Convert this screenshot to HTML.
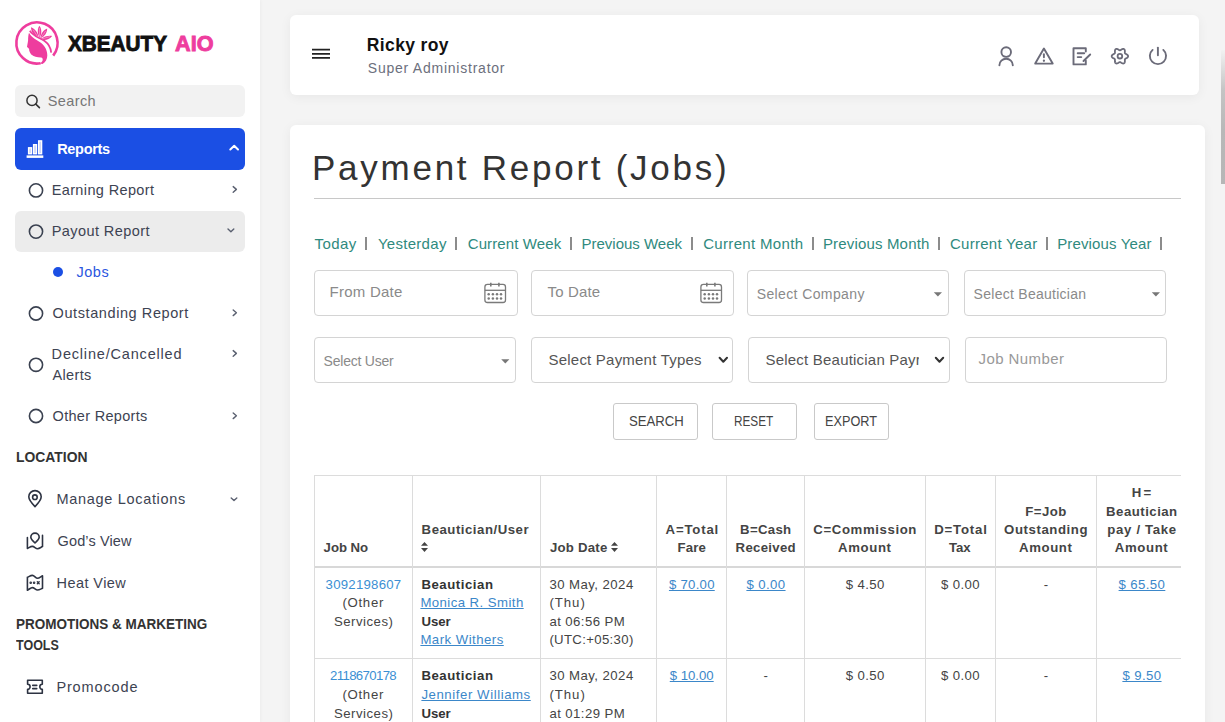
<!DOCTYPE html>
<html><head><meta charset="utf-8"><title>Payment Report (Jobs)</title>
<style>
*{box-sizing:border-box;margin:0;padding:0}
html,body{width:1225px;height:722px;overflow:hidden}
body{background:#f4f4f4;font-family:"Liberation Sans",sans-serif;position:relative}
.t{position:absolute;white-space:nowrap;line-height:normal}
.u{text-decoration:underline;text-underline-offset:1px;text-decoration-thickness:1px}
.abs{position:absolute}
#side{position:absolute;left:0;top:0;width:260px;height:722px;background:#fff;box-shadow:1px 0 3px rgba(0,0,0,.035)}
.card{position:absolute;background:#fff;border-radius:6px;box-shadow:0 2px 12px rgba(0,0,0,.055)}
.box{position:absolute;border:1px solid #d4d4d4;border-radius:4px;background:#fff}
.btn{position:absolute;border:1px solid #c9c9c9;border-radius:3px;background:#fff}
.sep{position:absolute;width:2px;height:13px;background:#8c8c8c;top:237px}
.hl{position:absolute;height:1px;background:#dcdcdc}
.vl{position:absolute;width:1px;background:#dcdcdc}
svg{position:absolute;overflow:visible}
</style></head><body>
<div id="side"></div>
<div class="card" style="left:290px;top:15px;width:909px;height:80px"></div>
<div class="card" style="left:290px;top:125px;width:915px;height:640px"></div>
<div class="abs" style="left:1221px;top:50px;width:4px;height:134px;background:linear-gradient(#f2f2f2 0px,#c4c4c4 40px,#b8b8b8 80px,#b6b6b6 134px)"></div>

<!-- sidebar boxes -->
<div class="abs" style="left:15px;top:85px;width:230px;height:32px;background:#f2f2f2;border-radius:6px"></div>
<div class="abs" style="left:15px;top:128px;width:230px;height:42px;background:#1b4fe4;border-radius:6px"></div>
<div class="abs" style="left:15px;top:211px;width:230px;height:41px;background:#ececec;border-radius:6px"></div>

<!-- title underline -->
<div class="abs" style="left:314px;top:198px;width:867px;height:1px;background:#c8c8c8"></div>

<!-- inputs -->
<div class="box" style="left:314px;top:270px;width:204px;height:46px"></div>
<div class="box" style="left:531px;top:270px;width:203px;height:46px"></div>
<div class="box" style="left:747px;top:270px;width:202px;height:46px"></div>
<div class="box" style="left:964px;top:270px;width:202px;height:46px"></div>
<div class="box" style="left:314px;top:337px;width:202px;height:46px"></div>
<div class="box" style="left:531px;top:337px;width:202px;height:46px"></div>
<div class="box" style="left:748px;top:337px;width:202px;height:46px"></div>
<div class="box" style="left:965px;top:337px;width:202px;height:46px"></div>

<!-- buttons -->
<div class="btn" style="left:613px;top:403px;width:85px;height:37px"></div>
<div class="btn" style="left:712px;top:403px;width:85px;height:37px"></div>
<div class="btn" style="left:814px;top:403px;width:75px;height:37px"></div>

<!-- table lines -->
<div class="hl" style="left:314px;top:475px;width:867px"></div>
<div class="hl" style="left:314px;top:566px;width:867px;height:2px;background:#d8d8d8"></div>
<div class="hl" style="left:314px;top:658px;width:867px"></div>
<div class="vl" style="left:314px;top:475px;height:247px"></div>
<div class="vl" style="left:412px;top:475px;height:247px"></div>
<div class="vl" style="left:540px;top:475px;height:247px"></div>
<div class="vl" style="left:656px;top:475px;height:247px"></div>
<div class="vl" style="left:726px;top:475px;height:247px"></div>
<div class="vl" style="left:804px;top:475px;height:247px"></div>
<div class="vl" style="left:925px;top:475px;height:247px"></div>
<div class="vl" style="left:995px;top:475px;height:247px"></div>
<div class="vl" style="left:1096px;top:475px;height:247px"></div>

<!-- link separators -->
<div class="sep" style="left:365px"></div>
<div class="sep" style="left:455px"></div>
<div class="sep" style="left:570px"></div>
<div class="sep" style="left:691px"></div>
<div class="sep" style="left:812px"></div>
<div class="sep" style="left:938px"></div>
<div class="sep" style="left:1046px"></div>
<div class="sep" style="left:1160px"></div>

<!-- logo -->
<svg style="left:12px;top:17px" width="50" height="50" viewBox="0 0 50 50">
 <path d="M28.6 46.2 A20.6 20.6 0 1 1 41.2 38.6" fill="none" stroke="#ee3d9e" stroke-width="2.6"/>
 <path d="M17 15.8 C16.3 18 16.1 21 16.1 23.3 C15.8 26 15.2 28.5 15 30 L16.7 31.3 C16.5 31.8 17.2 32.2 17.2 32.6 C17 33.5 17.5 34.6 18.1 35.8 C18.7 37 19.4 37.8 20 38 C21.5 39.5 25 40.3 29 40.5 C30.5 40.7 31 42 30.6 43.4 C30 44.8 29 45.6 27.8 46.4 L30.5 47 C33.5 45.5 35.3 42 35.3 38.5 C35.3 33 33 29 28.5 25.5 C24.5 22.5 19.5 21 17 15.8 Z" fill="#ee3d9e"/>
 <path d="M17.8 13.8 C21.5 19.6 27.5 20.4 32.3 23.8 C36.5 26.8 38.8 30.5 39.2 35.6" fill="none" stroke="#ee3d9e" stroke-width="1.7"/>
 <path d="M27.4 8.8 C25.2 12 25.2 16.5 27.6 20.6 C30 16.5 29.8 12 27.4 8.8 Z" fill="#ee3d9e"/>
 <path d="M19 10.3 C19 14.6 21.6 18.6 26.4 20.8 C26.2 16 23.6 12.3 19 10.3 Z" fill="#ee3d9e"/>
 <path d="M35.2 11.5 C31.2 13 28.9 16.8 28.4 21.2 C32.6 19.6 35 16 35.2 11.5 Z" fill="#ee3d9e"/>
 <path d="M40.2 19 C36.2 18.4 31.8 19.6 28.8 22.2 C32.8 23.8 37.2 22.6 40.2 19 Z" fill="#ee3d9e"/>
 <path d="M21.2 12.8 L25.6 19.6 M27.4 11 L27.5 19.5 M33.6 14 L29.2 20.4 M38 19.6 L30 21.9" stroke="#fff" stroke-width="0.45" opacity="0.8"/>
</svg>
<!-- search icon -->
<svg style="left:0;top:0" width="1" height="1"><circle cx="32" cy="100.4" r="5.1" fill="none" stroke="#333" stroke-width="1.5"/><path d="M35.8 104.2 L39.4 107.6" stroke="#333" stroke-width="1.6" stroke-linecap="round"/></svg>
<!-- reports icon -->
<svg style="left:0;top:0" width="1" height="1">
 <rect x="28.6" y="147.8" width="2.9" height="5.9" fill="#c9d3f7" stroke="#fff" stroke-width="1.4"/>
 <rect x="33.6" y="144.7" width="2.9" height="9" fill="#c9d3f7" stroke="#fff" stroke-width="1.4"/>
 <rect x="38.7" y="140.9" width="2.9" height="12.8" fill="#c9d3f7" stroke="#fff" stroke-width="1.4"/>
 <rect x="26.6" y="155.4" width="16.7" height="2.5" fill="#fff"/>
 <path d="M230.3 149.5 L234.2 145.8 L238 149.5" fill="none" stroke="#fff" stroke-width="2" stroke-linecap="round" stroke-linejoin="round"/>
</svg>
<!-- sidebar circles and chevrons -->
<svg style="left:0;top:0" width="1" height="1" fill="none" stroke="#3a4150" stroke-width="1.6">
 <circle cx="36" cy="190.4" r="6.6"/>
 <circle cx="36" cy="231.6" r="6.6"/>
 <circle cx="36" cy="313.5" r="6.6"/>
 <circle cx="36" cy="364.8" r="6.6"/>
 <circle cx="36" cy="416" r="6.6"/>
 <g stroke="#5a6070" stroke-width="1.4" stroke-linecap="round" stroke-linejoin="round">
  <path d="M233.2 186.6 L236.4 189.4 L233.2 192.2"/>
  <path d="M233.2 310 L236.4 312.8 L233.2 315.6"/>
  <path d="M233.2 350.6 L236.4 353.4 L233.2 356.2"/>
  <path d="M233.2 413 L236.4 415.8 L233.2 418.6"/>
  <path d="M228 229 L230.9 231.8 L233.8 229"/>
  <path d="M231.2 498 L234 500.6 L236.8 498"/>
 </g>
</svg>
<svg style="left:0;top:0" width="1" height="1"><circle cx="58" cy="272" r="5" fill="#1b4fe4"/></svg>
<!-- location icons -->
<svg style="left:22px;top:486px" width="26" height="26" viewBox="0 0 26 26" fill="none" stroke="#2d3342" stroke-width="1.6" stroke-linejoin="round" stroke-linecap="round">
 <path d="M13 20.6 C9.5 17 6.8 14 6.8 10.8 A6.2 6.2 0 0 1 19.2 10.8 C19.2 14 16.5 17 13 20.6 Z"/>
 <circle cx="12.9" cy="11.2" r="2.3"/>
</svg>
<svg style="left:22px;top:528px" width="26" height="26" viewBox="0 0 26 26" fill="none" stroke="#2d3342" stroke-width="1.6" stroke-linejoin="round" stroke-linecap="round">
 <path d="M13 15 C10.8 12.8 8.8 11.3 8.8 9.3 A4.2 4.2 0 0 1 17.2 9.3 C17.2 11.3 15.2 12.8 13 15 Z"/>
 <path d="M5.4 9.5 L5.4 20.4 C7.2 19.6 8.6 18.3 10.4 18.4 C12.4 18.5 13.6 20.7 15.5 20.7 C17.3 20.7 18.8 19.3 20.5 18.6 L20.5 7.4"/>
</svg>
<svg style="left:22px;top:570px" width="26" height="26" viewBox="0 0 26 26" fill="none" stroke="#2d3342" stroke-width="1.6" stroke-linejoin="round" stroke-linecap="round">
 <path d="M5.4 7.3 C7.2 6.5 8.6 5.4 10.4 5.4 C12.4 5.4 13.6 8.3 15.5 8.3 C17.3 8.3 18.8 6.6 20.5 5.8 L20.5 18.3 C18.8 19 17.3 20 15.5 20 C13.6 20 12.4 17.6 10.4 17.6 C8.6 17.6 7.2 19.4 5.4 20.2 Z"/>
 <circle cx="8.7" cy="12.8" r="0.5" fill="#2d3342"/>
 <circle cx="12.1" cy="12.8" r="0.5" fill="#2d3342"/>
 <path d="M15.3 11.8 L17.2 13.8 M17.2 11.8 L15.3 13.8" stroke-width="1.3"/>
</svg>
<svg style="left:22px;top:674px" width="26" height="26" viewBox="0 0 26 26" fill="none" stroke="#2d3342" stroke-width="1.6" stroke-linejoin="round" stroke-linecap="round">
 <path d="M5.6 6.3 L20.3 6.3 L20.3 10.3 A2.5 2.5 0 0 0 20.3 15.3 L20.3 19.2 L5.6 19.2 L5.6 15.3 A2.5 2.5 0 0 0 5.6 10.3 Z"/>
 <path d="M10.8 11.3 L14.7 11.3 M10.8 14.6 L14.7 14.6" stroke-width="1.7"/>
</svg>
<!-- hamburger -->
<svg style="left:0;top:0" width="1" height="1"><path d="M312 49.7 H330 M312 53.8 H330 M312 57.9 H330" stroke="#222" stroke-width="1.8"/></svg>
<!-- header icons -->
<svg style="left:0;top:0" width="1" height="1" fill="none" stroke="#6b6b79" stroke-width="1.9" stroke-linecap="round" stroke-linejoin="round">
 <circle cx="1006.2" cy="52.1" r="4.8"/>
 <path d="M999.4 65.2 A6.6 6.3 0 0 1 1012.8 65.2"/>
 <path d="M1043.9 48.6 L1035.2 63.6 L1052.7 63.6 Z"/>
 <path d="M1043.9 54.2 L1043.9 57.2"/>
 <path d="M1043.9 60.6 L1043.9 60.8" stroke-width="2.2"/>
 <path d="M1085.8 48.3 L1073.5 48.3 L1073.5 64.4 L1085.8 64.4 L1085.8 60.4 M1085.8 51.6 L1085.8 48.3"/>
 <path d="M1077.7 53.3 L1084.2 53.3 M1077.7 57.1 L1081.3 57.1"/>
 <path d="M1083.5 61 L1090.2 54.5"/>
 <path d="M1157.9 47.6 L1157.9 55.3"/>
 <path d="M1152.6 49.9 A8.1 8.1 0 1 0 1163.3 49.9"/>
</svg>
<svg style="left:1103px;top:49px" width="34" height="15" viewBox="0 0 24 24" fill="none" stroke="#6b6b79" stroke-width="2.1" stroke-linejoin="round"></svg>
<svg style="left:0;top:0" width="1" height="1" fill="none" stroke="#6b6b79" stroke-width="1.8" stroke-linejoin="round"><path d="M1128.10 56.20 L1128.07 56.49 L1127.98 56.77 L1127.84 57.03 L1127.64 57.29 L1127.41 57.52 L1127.14 57.74 L1126.86 57.93 L1126.56 58.11 L1126.27 58.27 L1125.98 58.41 L1125.72 58.55 L1125.49 58.69 L1125.29 58.83 L1125.13 58.98 L1125.01 59.15 L1124.92 59.34 L1124.87 59.55 L1124.85 59.80 L1124.85 60.07 L1124.86 60.36 L1124.88 60.68 L1124.88 61.01 L1124.88 61.36 L1124.86 61.70 L1124.80 62.04 L1124.71 62.36 L1124.59 62.66 L1124.43 62.92 L1124.23 63.13 L1124.00 63.30 L1123.74 63.42 L1123.45 63.48 L1123.15 63.49 L1122.83 63.45 L1122.51 63.37 L1122.19 63.24 L1121.88 63.09 L1121.58 62.92 L1121.29 62.75 L1121.02 62.58 L1120.77 62.42 L1120.54 62.29 L1120.32 62.18 L1120.11 62.12 L1119.90 62.10 L1119.69 62.12 L1119.48 62.18 L1119.26 62.29 L1119.03 62.42 L1118.78 62.58 L1118.51 62.75 L1118.22 62.92 L1117.92 63.09 L1117.61 63.24 L1117.29 63.37 L1116.97 63.45 L1116.65 63.49 L1116.35 63.48 L1116.06 63.42 L1115.80 63.30 L1115.57 63.13 L1115.37 62.92 L1115.21 62.66 L1115.09 62.36 L1115.00 62.04 L1114.94 61.70 L1114.92 61.36 L1114.92 61.01 L1114.92 60.68 L1114.94 60.36 L1114.95 60.07 L1114.95 59.80 L1114.93 59.55 L1114.88 59.34 L1114.79 59.15 L1114.67 58.98 L1114.51 58.83 L1114.31 58.69 L1114.08 58.55 L1113.82 58.41 L1113.53 58.27 L1113.24 58.11 L1112.94 57.93 L1112.66 57.74 L1112.39 57.52 L1112.16 57.29 L1111.96 57.03 L1111.82 56.77 L1111.73 56.49 L1111.70 56.20 L1111.73 55.91 L1111.82 55.63 L1111.96 55.37 L1112.16 55.11 L1112.39 54.88 L1112.66 54.66 L1112.94 54.47 L1113.24 54.29 L1113.53 54.13 L1113.82 53.99 L1114.08 53.85 L1114.31 53.71 L1114.51 53.57 L1114.67 53.42 L1114.79 53.25 L1114.88 53.06 L1114.93 52.85 L1114.95 52.60 L1114.95 52.33 L1114.94 52.04 L1114.92 51.72 L1114.92 51.39 L1114.92 51.04 L1114.94 50.70 L1115.00 50.36 L1115.09 50.04 L1115.21 49.74 L1115.37 49.48 L1115.57 49.27 L1115.80 49.10 L1116.06 48.98 L1116.35 48.92 L1116.65 48.91 L1116.97 48.95 L1117.29 49.03 L1117.61 49.16 L1117.92 49.31 L1118.22 49.48 L1118.51 49.65 L1118.78 49.82 L1119.03 49.98 L1119.26 50.11 L1119.48 50.22 L1119.69 50.28 L1119.90 50.30 L1120.11 50.28 L1120.32 50.22 L1120.54 50.11 L1120.77 49.98 L1121.02 49.82 L1121.29 49.65 L1121.58 49.48 L1121.88 49.31 L1122.19 49.16 L1122.51 49.03 L1122.83 48.95 L1123.15 48.91 L1123.45 48.92 L1123.74 48.98 L1124.00 49.10 L1124.23 49.27 L1124.43 49.48 L1124.59 49.74 L1124.71 50.04 L1124.80 50.36 L1124.86 50.70 L1124.88 51.04 L1124.88 51.39 L1124.88 51.72 L1124.86 52.04 L1124.85 52.33 L1124.85 52.60 L1124.87 52.85 L1124.92 53.06 L1125.01 53.25 L1125.13 53.42 L1125.29 53.57 L1125.49 53.71 L1125.72 53.85 L1125.98 53.99 L1126.27 54.13 L1126.56 54.29 L1126.86 54.47 L1127.14 54.66 L1127.41 54.88 L1127.64 55.11 L1127.84 55.37 L1127.98 55.63 L1128.07 55.91 Z"/><circle cx="1119.9" cy="56.2" r="2.3"/></svg>
<!-- calendar icons -->
<svg style="left:480px;top:278px" width="30" height="30" viewBox="0 0 30 30" fill="none" stroke="#7a7a7a" stroke-width="1.3">
 <rect x="4.9" y="6.4" width="20.6" height="18.1" rx="2.5"/>
 <path d="M4.9 12.3 H25.5"/>
 <path d="M10.8 4.8 V8.4 M18.9 4.8 V8.4" stroke-width="1.6"/>
 <g fill="#7a7a7a" stroke="none"><circle cx="8.7" cy="16.2" r="1.25"/><circle cx="12.9" cy="16.2" r="1.25"/><circle cx="17" cy="16.2" r="1.25"/><circle cx="21" cy="16.2" r="1.25"/><circle cx="8.7" cy="20.4" r="1.25"/><circle cx="12.9" cy="20.4" r="1.25"/><circle cx="17" cy="20.4" r="1.25"/><circle cx="21" cy="20.4" r="1.25"/></g>
</svg>
<svg style="left:696px;top:278px" width="30" height="30" viewBox="0 0 30 30" fill="none" stroke="#7a7a7a" stroke-width="1.3">
 <rect x="4.9" y="6.4" width="20.6" height="18.1" rx="2.5"/>
 <path d="M4.9 12.3 H25.5"/>
 <path d="M10.8 4.8 V8.4 M18.9 4.8 V8.4" stroke-width="1.6"/>
 <g fill="#7a7a7a" stroke="none"><circle cx="8.7" cy="16.2" r="1.25"/><circle cx="12.9" cy="16.2" r="1.25"/><circle cx="17" cy="16.2" r="1.25"/><circle cx="21" cy="16.2" r="1.25"/><circle cx="8.7" cy="20.4" r="1.25"/><circle cx="12.9" cy="20.4" r="1.25"/><circle cx="17" cy="20.4" r="1.25"/><circle cx="21" cy="20.4" r="1.25"/></g>
</svg>
<!-- select arrows -->
<svg style="left:0;top:0" width="1" height="1">
 <path d="M933.8 292.2 L942 292.2 L937.9 296.6 Z" fill="#777"/>
 <path d="M1151.8 292.2 L1160 292.2 L1155.9 296.6 Z" fill="#777"/>
 <path d="M501.2 359.2 L509.4 359.2 L505.3 363.6 Z" fill="#777"/>
 <path d="M719.6 357.8 L723.3 361.8 L727 357.8" fill="none" stroke="#333" stroke-width="2" stroke-linecap="round" stroke-linejoin="round"/>
 <path d="M935.8 357.8 L939.5 361.8 L943.2 357.8" fill="none" stroke="#333" stroke-width="2" stroke-linecap="round" stroke-linejoin="round"/>
 <path d="M421 545.8 L424.5 542 L428 545.8 Z M421 548 L424.5 551.9 L428 548 Z" fill="#444"/>
 <path d="M611 545.8 L614.5 542 L618 545.8 Z M611 548 L614.5 551.9 L618 548 Z" fill="#444"/>
</svg>

<div class="t" style="left:67.90px;top:31px;font-size:22px;font-weight:700;color:#111111;transform:scaleX(0.9417);transform-origin:0 0;-webkit-text-stroke:0.9px #111111">XBEAUTY</div>
<div class="t" style="left:175.10px;top:31px;font-size:22px;font-weight:700;color:#ee3d9e;transform:scaleX(0.9846);transform-origin:0 0;-webkit-text-stroke:0.9px #ee3d9e">AIO</div>
<div class="t" style="left:47.80px;top:93px;font-size:14.5px;font-weight:400;color:#767676;letter-spacing:0.384px">Search</div>
<div class="t" style="left:57.20px;top:141px;font-size:14.5px;font-weight:600;color:#ffffff;letter-spacing:-0.304px">Reports</div>
<div class="t" style="left:51.70px;top:182px;font-size:14.5px;font-weight:400;color:#3d4352;letter-spacing:0.369px">Earning Report</div>
<div class="t" style="left:51.70px;top:223px;font-size:14.5px;font-weight:400;color:#3d4352;letter-spacing:0.428px">Payout Report</div>
<div class="t" style="left:76.60px;top:264px;font-size:14.5px;font-weight:400;color:#2b56e0;letter-spacing:0.474px">Jobs</div>
<div class="t" style="left:52.60px;top:305px;font-size:14.5px;font-weight:400;color:#3d4352;letter-spacing:0.587px">Outstanding Report</div>
<div class="t" style="left:51.60px;top:346px;font-size:14.5px;font-weight:400;color:#3d4352;letter-spacing:0.818px">Decline/Cancelled</div>
<div class="t" style="left:52.60px;top:367px;font-size:14.5px;font-weight:400;color:#3d4352;letter-spacing:0.317px">Alerts</div>
<div class="t" style="left:52.60px;top:408px;font-size:14.5px;font-weight:400;color:#3d4352;letter-spacing:0.299px">Other Reports</div>
<div class="t" style="left:15.50px;top:449px;font-size:14.5px;font-weight:700;color:#333333;transform:scaleX(0.9573);transform-origin:0 0">LOCATION</div>
<div class="t" style="left:56.60px;top:491px;font-size:14.5px;font-weight:400;color:#3d4352;letter-spacing:0.677px">Manage Locations</div>
<div class="t" style="left:57.60px;top:533px;font-size:14.5px;font-weight:400;color:#3d4352;letter-spacing:0.107px">God’s View</div>
<div class="t" style="left:56.60px;top:575px;font-size:14.5px;font-weight:400;color:#3d4352;letter-spacing:0.418px">Heat View</div>
<div class="t" style="left:15.90px;top:616px;font-size:14.5px;font-weight:700;color:#333333;transform:scaleX(0.9316);transform-origin:0 0">PROMOTIONS &amp; MARKETING</div>
<div class="t" style="left:15.90px;top:637px;font-size:14.5px;font-weight:700;color:#333333;transform:scaleX(0.8618);transform-origin:0 0">TOOLS</div>
<div class="t" style="left:56.40px;top:679px;font-size:14.5px;font-weight:400;color:#3d4352;letter-spacing:0.864px">Promocode</div>
<div class="t" style="left:366.80px;top:35px;font-size:17.5px;font-weight:700;color:#111111;letter-spacing:0.367px">Ricky roy</div>
<div class="t" style="left:367.80px;top:60px;font-size:14px;font-weight:400;color:#6c6f7d;letter-spacing:0.764px">Super Administrator</div>
<div class="t" style="left:312.00px;top:148px;font-size:35px;font-weight:400;color:#333333;letter-spacing:2.740px">Payment Report (Jobs)</div>
<div class="t" style="left:314.50px;top:235px;font-size:15px;font-weight:400;color:#2f8a7e;letter-spacing:0.418px">Today</div>
<div class="t" style="left:377.90px;top:235px;font-size:15px;font-weight:400;color:#2f8a7e;letter-spacing:0.293px">Yesterday</div>
<div class="t" style="left:467.70px;top:235px;font-size:15px;font-weight:400;color:#2f8a7e;letter-spacing:0.113px">Current Week</div>
<div class="t" style="left:581.50px;top:235px;font-size:15px;font-weight:400;color:#2f8a7e;letter-spacing:-0.008px">Previous Week</div>
<div class="t" style="left:703.20px;top:235px;font-size:15px;font-weight:400;color:#2f8a7e;letter-spacing:0.331px">Current Month</div>
<div class="t" style="left:822.90px;top:235px;font-size:15px;font-weight:400;color:#2f8a7e;letter-spacing:0.171px">Previous Month</div>
<div class="t" style="left:949.90px;top:235px;font-size:15px;font-weight:400;color:#2f8a7e;letter-spacing:0.282px">Current Year</div>
<div class="t" style="left:1057.20px;top:235px;font-size:15px;font-weight:400;color:#2f8a7e;letter-spacing:0.138px">Previous Year</div>
<div class="t" style="left:329.50px;top:283px;font-size:15px;font-weight:400;color:#8a8a8a;letter-spacing:0.249px">From Date</div>
<div class="t" style="left:547.50px;top:283px;font-size:15px;font-weight:400;color:#8a8a8a;letter-spacing:0.158px">To Date</div>
<div class="t" style="left:756.70px;top:286px;font-size:14px;font-weight:400;color:#8a8a8a;letter-spacing:0.383px">Select Company</div>
<div class="t" style="left:973.60px;top:286px;font-size:14px;font-weight:400;color:#8a8a8a;letter-spacing:0.269px">Select Beautician</div>
<div class="t" style="left:323.60px;top:353px;font-size:14px;font-weight:400;color:#8a8a8a;letter-spacing:-0.230px">Select User</div>
<div class="t" style="left:548.50px;top:351px;font-size:15px;font-weight:400;color:#555555;letter-spacing:0.214px">Select Payment Types</div>
<div class="t" style="left:765.50px;top:351px;font-size:15px;font-weight:400;color:#555555;letter-spacing:0.21px;width:153.20px;overflow:hidden">Select Beautician Payr</div>
<div class="t" style="left:978.50px;top:350px;font-size:15px;font-weight:400;color:#999999;letter-spacing:0.433px">Job Number</div>
<div class="t" style="left:628.60px;top:413px;font-size:14px;font-weight:400;color:#444444;transform:scaleX(0.9400);transform-origin:0 0">SEARCH</div>
<div class="t" style="left:734.36px;top:413px;font-size:14px;font-weight:400;color:#444444;transform:scaleX(0.8412);transform-origin:0 0">RESET</div>
<div class="t" style="left:824.79px;top:413px;font-size:14px;font-weight:400;color:#444444;transform:scaleX(0.9073);transform-origin:0 0">EXPORT</div>
<div class="t" style="left:323.60px;top:540px;font-size:13.2px;font-weight:700;color:#444444;letter-spacing:-0.047px">Job No</div>
<div class="t" style="left:421.60px;top:522px;font-size:13.2px;font-weight:700;color:#444444;letter-spacing:0.518px">Beautician/User</div>
<div class="t" style="left:549.90px;top:540px;font-size:13.2px;font-weight:700;color:#444444;letter-spacing:0.235px">Job Date</div>
<div class="t" style="left:665.55px;top:522px;font-size:13.2px;font-weight:700;color:#444444;letter-spacing:0.820px">A=Total</div>
<div class="t" style="left:677.50px;top:540px;font-size:13.2px;font-weight:700;color:#444444;letter-spacing:0.193px">Fare</div>
<div class="t" style="left:740.10px;top:522px;font-size:13.2px;font-weight:700;color:#444444;letter-spacing:0.317px">B=Cash</div>
<div class="t" style="left:735.60px;top:540px;font-size:13.2px;font-weight:700;color:#444444;letter-spacing:0.306px">Received</div>
<div class="t" style="left:813.35px;top:522px;font-size:13.2px;font-weight:700;color:#444444;letter-spacing:0.608px">C=Commission</div>
<div class="t" style="left:838.10px;top:540px;font-size:13.2px;font-weight:700;color:#444444;letter-spacing:0.617px">Amount</div>
<div class="t" style="left:934.15px;top:522px;font-size:13.2px;font-weight:700;color:#444444;letter-spacing:0.820px">D=Total</div>
<div class="t" style="left:948.95px;top:540px;font-size:13.2px;font-weight:700;color:#444444;letter-spacing:-0.005px">Tax</div>
<div class="t" style="left:1025.35px;top:504px;font-size:13.2px;font-weight:700;color:#444444;letter-spacing:0.413px">F=Job</div>
<div class="t" style="left:1004.10px;top:522px;font-size:13.2px;font-weight:700;color:#444444;letter-spacing:0.571px">Outstanding</div>
<div class="t" style="left:1019.00px;top:540px;font-size:13.2px;font-weight:700;color:#444444;letter-spacing:0.617px">Amount</div>
<div class="t" style="left:1131.80px;top:485px;font-size:13.2px;font-weight:700;color:#444444;letter-spacing:-0.794px">H =</div>
<div class="t" style="left:1106.10px;top:504px;font-size:13.2px;font-weight:700;color:#444444;letter-spacing:0.485px">Beautician</div>
<div class="t" style="left:1107.35px;top:522px;font-size:13.2px;font-weight:700;color:#444444;letter-spacing:0.671px">pay / Take</div>
<div class="t" style="left:1114.85px;top:540px;font-size:13.2px;font-weight:700;color:#444444;letter-spacing:0.617px">Amount</div>
<div class="t" style="left:325.60px;top:577px;font-size:13.2px;font-weight:400;color:#3b8fd3;letter-spacing:0.244px">3092198607</div>
<div class="t" style="left:342.50px;top:595px;font-size:13.2px;font-weight:400;color:#444444;letter-spacing:0.684px">(Other</div>
<div class="t" style="left:333.90px;top:614px;font-size:13.2px;font-weight:400;color:#444444;letter-spacing:0.504px">Services)</div>
<div class="t" style="left:421.40px;top:577px;font-size:13.2px;font-weight:700;color:#333333;letter-spacing:0.541px">Beautician</div>
<div class="t u" style="left:420.40px;top:595px;font-size:13.2px;font-weight:400;color:#3b87c9;letter-spacing:0.436px">Monica R. Smith</div>
<div class="t" style="left:421.40px;top:614px;font-size:13.2px;font-weight:700;color:#333333">User</div>
<div class="t" style="left:549.40px;top:577px;font-size:13.2px;font-weight:400;color:#444444;letter-spacing:0.446px">30 May, 2024</div>
<div class="t" style="left:549.40px;top:595px;font-size:13.2px;font-weight:400;color:#444444;letter-spacing:0.971px">(Thu)</div>
<div class="t" style="left:549.40px;top:614px;font-size:13.2px;font-weight:400;color:#444444;letter-spacing:0.418px">at 06:56 PM</div>
<div class="t u" style="left:420.40px;top:632px;font-size:13.2px;font-weight:400;color:#3b87c9;letter-spacing:0.475px">Mark Withers</div>
<div class="t" style="left:549.40px;top:632px;font-size:13.2px;font-weight:400;color:#444444;letter-spacing:0.331px">(UTC:+05:30)</div>
<div class="t u" style="left:668.95px;top:577px;font-size:13.2px;font-weight:400;color:#3b87c9;letter-spacing:0.256px">$ 70.00</div>
<div class="t u" style="left:746.40px;top:577px;font-size:13.2px;font-weight:400;color:#3b87c9;letter-spacing:0.414px">$ 0.00</div>
<div class="t" style="left:845.65px;top:577px;font-size:13.2px;font-weight:400;color:#444444;letter-spacing:0.414px">$ 4.50</div>
<div class="t" style="left:940.95px;top:577px;font-size:13.2px;font-weight:400;color:#444444;letter-spacing:0.414px">$ 0.00</div>
<div class="t" style="left:1043.75px;top:577px;font-size:13.2px;font-weight:400;color:#444444">-</div>
<div class="t u" style="left:1118.60px;top:577px;font-size:13.2px;font-weight:400;color:#3b87c9;letter-spacing:0.389px">$ 65.50</div>
<div class="t" style="left:330.05px;top:668px;font-size:13.2px;font-weight:400;color:#3b8fd3;letter-spacing:-0.637px">2118670178</div>
<div class="t" style="left:342.50px;top:687px;font-size:13.2px;font-weight:400;color:#444444;letter-spacing:0.684px">(Other</div>
<div class="t" style="left:333.90px;top:706px;font-size:13.2px;font-weight:400;color:#444444;letter-spacing:0.504px">Services)</div>
<div class="t" style="left:421.40px;top:668px;font-size:13.2px;font-weight:700;color:#333333;letter-spacing:0.541px">Beautician</div>
<div class="t u" style="left:421.40px;top:687px;font-size:13.2px;font-weight:400;color:#3b87c9;letter-spacing:0.571px">Jennifer Williams</div>
<div class="t" style="left:421.40px;top:706px;font-size:13.2px;font-weight:700;color:#333333">User</div>
<div class="t" style="left:549.40px;top:668px;font-size:13.2px;font-weight:400;color:#444444;letter-spacing:0.446px">30 May, 2024</div>
<div class="t" style="left:549.40px;top:687px;font-size:13.2px;font-weight:400;color:#444444;letter-spacing:0.971px">(Thu)</div>
<div class="t" style="left:549.40px;top:706px;font-size:13.2px;font-weight:400;color:#444444;letter-spacing:0.418px">at 01:29 PM</div>
<div class="t u" style="left:669.75px;top:668px;font-size:13.2px;font-weight:400;color:#3b87c9;letter-spacing:-0.011px">$ 10.00</div>
<div class="t" style="left:763.60px;top:668px;font-size:13.2px;font-weight:400;color:#444444">-</div>
<div class="t" style="left:845.65px;top:668px;font-size:13.2px;font-weight:400;color:#444444;letter-spacing:0.414px">$ 0.50</div>
<div class="t" style="left:940.95px;top:668px;font-size:13.2px;font-weight:400;color:#444444;letter-spacing:0.414px">$ 0.00</div>
<div class="t" style="left:1043.75px;top:668px;font-size:13.2px;font-weight:400;color:#444444">-</div>
<div class="t u" style="left:1122.40px;top:668px;font-size:13.2px;font-weight:400;color:#3b87c9;letter-spacing:0.414px">$ 9.50</div>
</body></html>
